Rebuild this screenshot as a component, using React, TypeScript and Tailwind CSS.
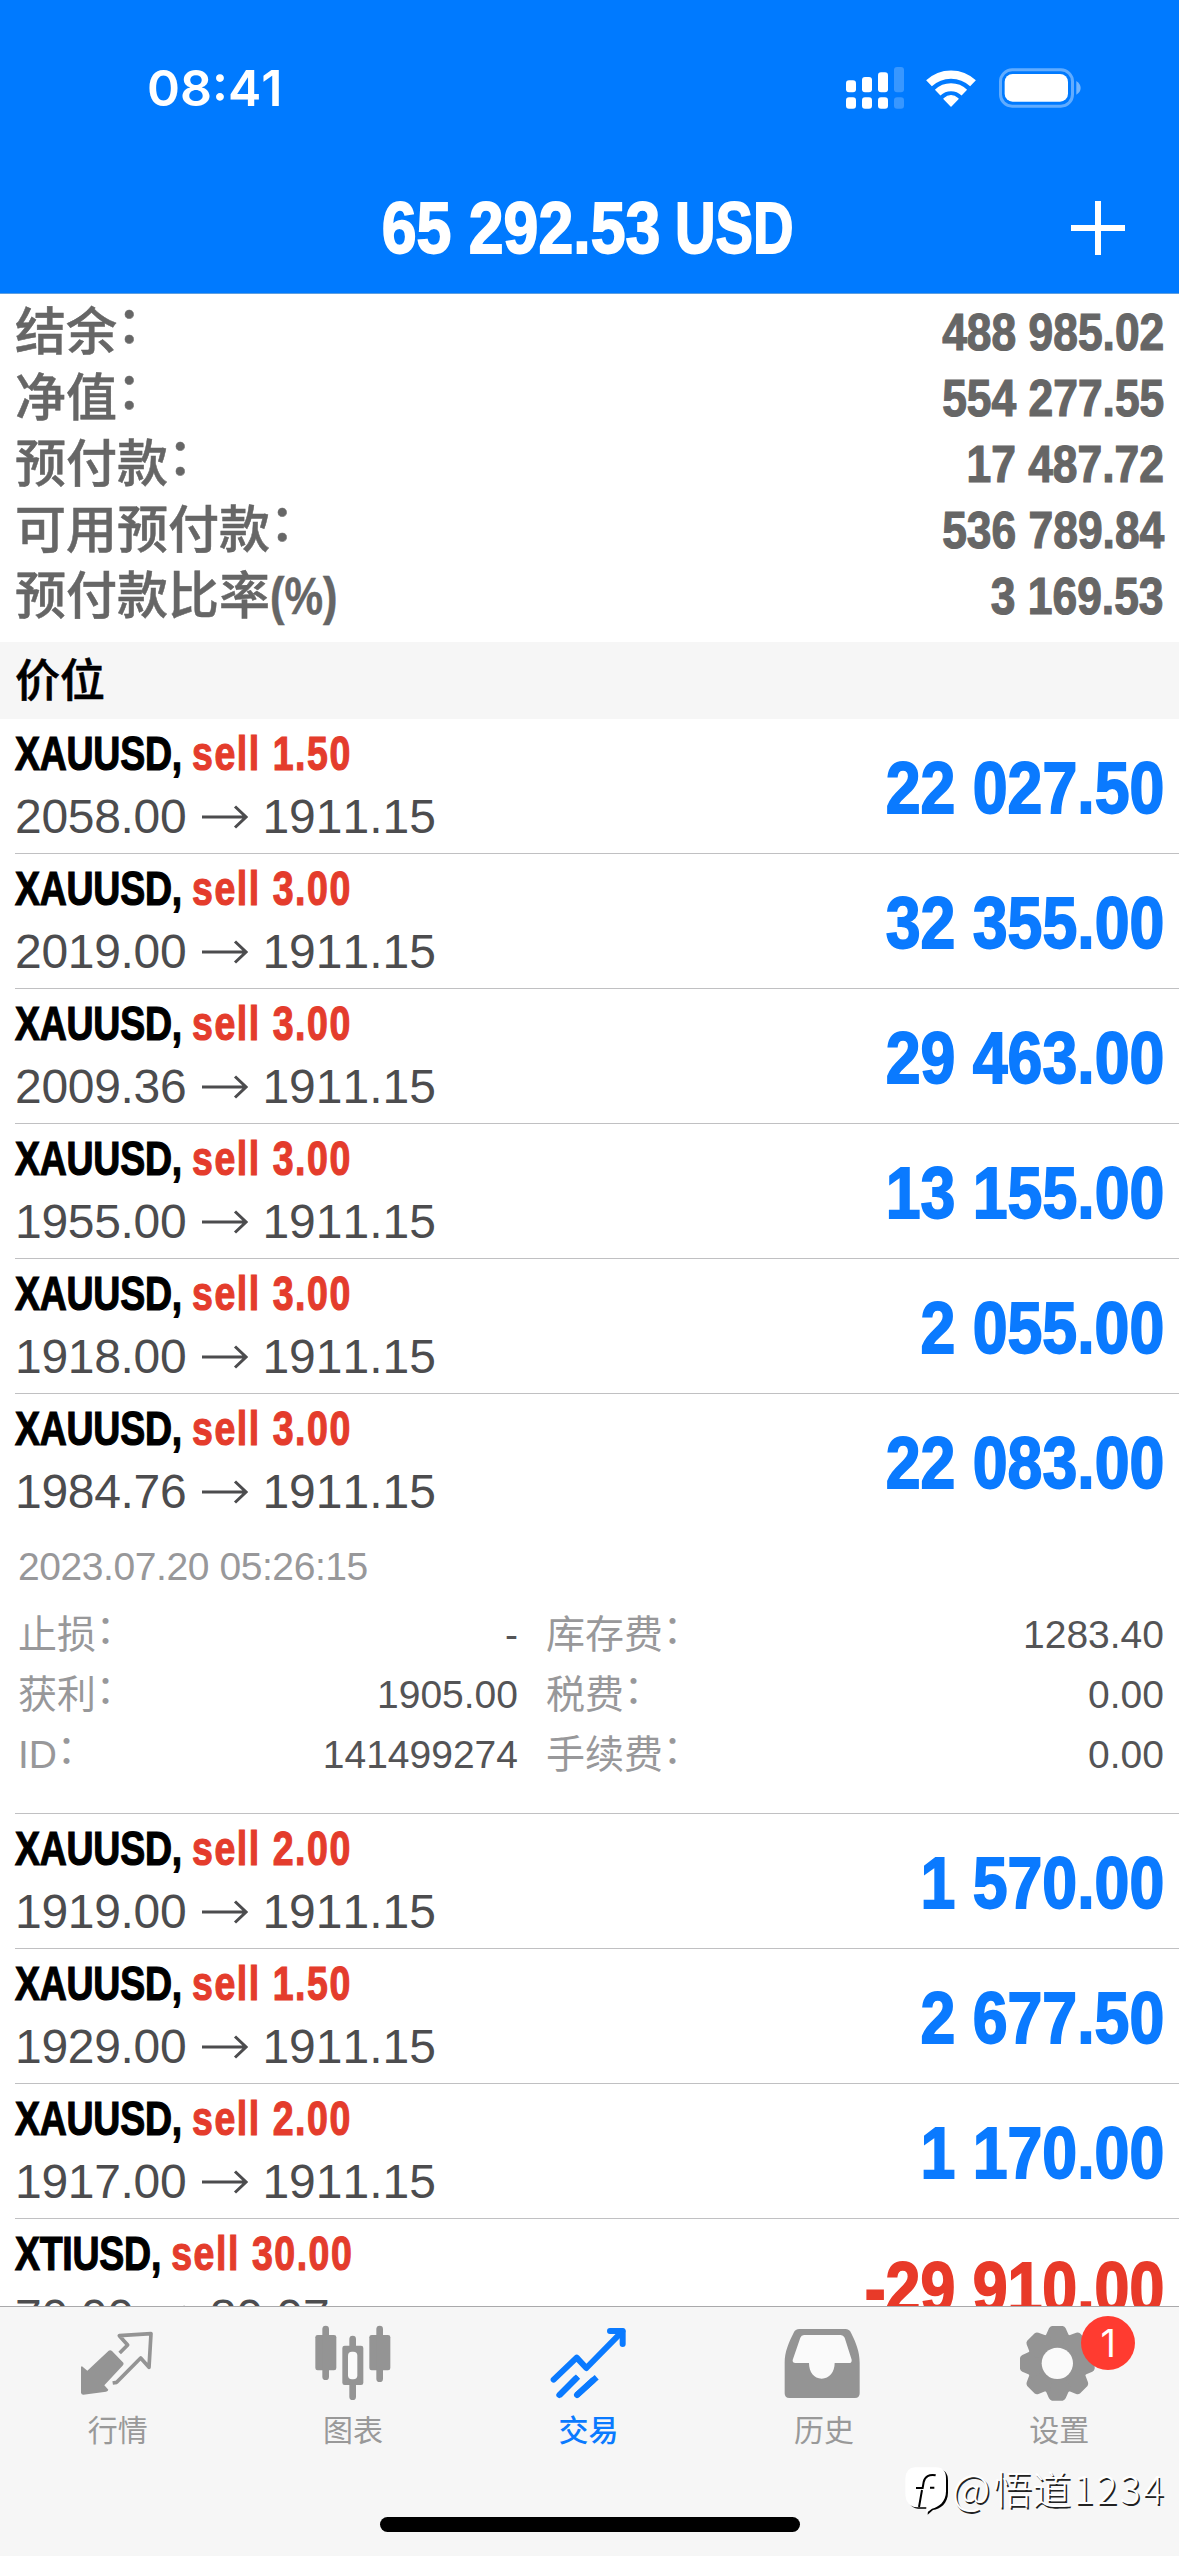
import type { ReactNode } from 'react'

type Trade = {
  symbol: string
  volume: string
  open: string
  current: string
  profit: string
  expanded?: boolean
}

const summary = [
  { label: '结余', colon: true, value: '488 985.02' },
  { label: '净值', colon: true, value: '554 277.55' },
  { label: '预付款', colon: true, value: '17 487.72' },
  { label: '可用预付款', colon: true, value: '536 789.84' },
  { label: '预付款比率', colon: false, value: '3 169.53' },
]

const trades: Trade[] = [
  { symbol: 'XAUUSD', volume: '1.50', open: '2058.00', current: '1911.15', profit: '22 027.50' },
  { symbol: 'XAUUSD', volume: '3.00', open: '2019.00', current: '1911.15', profit: '32 355.00' },
  { symbol: 'XAUUSD', volume: '3.00', open: '2009.36', current: '1911.15', profit: '29 463.00' },
  { symbol: 'XAUUSD', volume: '3.00', open: '1955.00', current: '1911.15', profit: '13 155.00' },
  { symbol: 'XAUUSD', volume: '3.00', open: '1918.00', current: '1911.15', profit: '2 055.00' },
  { symbol: 'XAUUSD', volume: '3.00', open: '1984.76', current: '1911.15', profit: '22 083.00', expanded: true },
  { symbol: 'XAUUSD', volume: '2.00', open: '1919.00', current: '1911.15', profit: '1 570.00' },
  { symbol: 'XAUUSD', volume: '1.50', open: '1929.00', current: '1911.15', profit: '2 677.50' },
  { symbol: 'XAUUSD', volume: '2.00', open: '1917.00', current: '1911.15', profit: '1 170.00' },
  { symbol: 'XTIUSD', volume: '30.00', open: '70.00', current: '80.07', profit: '-29 910.00' },
]

const details = [
  [
    { label: '止损', value: '-' },
    { label: '库存费', value: '1283.40' },
  ],
  [
    { label: '获利', value: '1905.00' },
    { label: '税费', value: '0.00' },
  ],
  [
    { label: 'ID', value: '141499274' },
    { label: '手续费', value: '0.00' },
  ],
]

// full width colon, lifted so its dots sit in the middle of the line
const Colon = () => (
  <span lang="ja" className="relative -top-[0.07em] -ml-[0.26em] font-['Noto_Sans_CJK_JP',sans-serif] leading-0">
    ：
  </span>
)

const SignalIcon = () => (
  <svg width="58" height="42" viewBox="48 50 174 126" fill="#fff">
    <rect x="48" y="90" width="30" height="36" rx="9" />
    <rect x="96" y="80" width="30" height="46" rx="9" />
    <rect x="144" y="66" width="30" height="60" rx="9" />
    <rect x="192" y="50" width="30" height="76" rx="9" opacity="0.22" />
    <rect x="48" y="141" width="30" height="34" rx="9" />
    <rect x="96" y="141" width="30" height="34" rx="9" />
    <rect x="144" y="141" width="30" height="34" rx="9" />
    <rect x="192" y="141" width="30" height="34" rx="9" opacity="0.22" />
  </svg>
)

const WifiIcon = () => (
  <svg width="52" height="38" viewBox="286 55 156 114" fill="none" stroke="#fff" strokeWidth="25">
    <path d="M298 98A96 96 0 0 1 430 98" />
    <path d="M324 126A58 58 0 0 1 404 126" strokeWidth="24" />
    <path d="M343 144Q364 126 385 144L364 166Z" fill="#fff" stroke="#fff" strokeWidth="4" strokeLinejoin="round" />
  </svg>
)

const BatteryIcon = () => (
  <svg width="82" height="40" viewBox="508 53 246 120">
    <rect x="512.5" y="58.5" width="216" height="109" rx="35" fill="none" stroke="#fff" strokeOpacity="0.38" strokeWidth="9" />
    <rect x="525" y="71" width="190" height="83" rx="24" fill="#fff" />
    <path d="M740 92Q753 101 753 113T740 133Z" fill="#fff" fillOpacity="0.45" />
  </svg>
)

const QuotesIcon = () => (
  <svg width="76" height="77" viewBox="60 45 228 231">
    <path
      d="M66 169L82 182 146 122Q151 119 156 123L190 158Q192 162 189 166L133 226 145 239Q144 244 138 245L70 254Q64 254 63 248V170Z"
      fill="#949494"
    />
    <path
      d="M179 129L203 105 178 77 273 71 267 172 242 144 170 217 158 219"
      fill="none"
      stroke="#949494"
      strokeWidth="11"
      strokeLinejoin="round"
    />
  </svg>
)

const ChartIcon = () => (
  <svg width="78" height="77" viewBox="761 45 234 231" fill="#949494">
    <rect x="765" y="75" width="63" height="106" rx="7" />
    <rect x="786" y="47" width="20" height="163" rx="10" />
    <rect x="927" y="75" width="63" height="106" rx="7" />
    <rect x="948" y="47" width="20" height="169" rx="10" />
    <rect x="846" y="107" width="63" height="118" rx="7" />
    <rect x="867" y="77" width="20" height="193" rx="10" />
    <rect x="863" y="125" width="28" height="83" rx="12" fill="#fafafa" />
  </svg>
)

const TradeIcon = () => (
  <svg
    width="78"
    height="77"
    viewBox="61 45 234 231"
    fill="none"
    stroke="#0a7aff"
    strokeWidth="18"
    strokeLinecap="round"
    strokeLinejoin="round"
  >
    <path d="M72 209L141 143 170 174 278 64" />
    <path d="M241 63H279V102" />
    <path d="M89 256L145 200" strokeLinecap="butt" />
    <path d="M141 256L201 202" strokeLinecap="butt" />
    <path d="M89 255L138 206M142 255L190 211" />
  </svg>
)

const HistoryIcon = () => (
  <svg width="82" height="77" viewBox="763 45 246 231">
    <path
      d="M812 57H950Q962 57 967 68C982 98 993 125 993 158V250Q993 264 979 264H782Q768 264 768 250V158C768 125 780 98 795 68Q800 57 812 57Z"
      fill="#949494"
    />
    <path
      d="M826 75H936Q944 75 948 83L969 149Q970 159 961 159H918C918 186 902 206 879 206S841 186 841 159H800Q791 159 792 150L815 83Q818 75 826 75Z"
      fill="#fafafa"
    />
  </svg>
)

const SettingsIcon = () => (
  <svg width="80" height="77" viewBox="393 45 240 231" fill="#949494">
    <circle cx="508" cy="160" r="88" />
    {[0, 45, 90, 135, 180, 225, 270, 315].map((angle) => (
      <path
        key={angle}
        d="M492 48H524Q530 49 533 55L541 73Q544 80 552 84L508 150 464 84Q472 80 475 73L483 55Q486 49 492 48Z"
        transform={`rotate(${angle} 508 160)`}
      />
    ))}
    <circle cx="508" cy="160" r="47" fill="#fafafa" />
  </svg>
)

const WatermarkLogo = () => (
  <svg width="45" height="49" viewBox="42 476 135 147">
    <path
      d="M80 484H140Q174 484 174 520V556C174 588 150 606 129 608L113 622 114 604H84Q52 600 52 560V518Q54 484 80 484Z"
      fill="#000"
    />
    <path
      d="M76 480H138Q168 480 168 514V552C168 584 146 600 126 604L108 618 109 600H80Q46 596 46 556V514Q48 480 76 480Z"
      fill="#fff"
    />
    <path
      d="M137 504C118 500 104 508 101 524L98 542H78M96 548L87 599M120 541H133"
      fill="none"
      stroke="#000"
      strokeWidth="6"
    />
  </svg>
)

const Tab = ({ label, active, children }: { label: string; active?: boolean; children: ReactNode }) => (
  <div className="flex flex-1 flex-col items-center">
    <div className="relative">{children}</div>
    <div
      className={
        active
          ? 'mt-[9px] text-[30px] leading-[40px] font-medium text-[#0a7aff]'
          : 'mt-[9px] text-[30px] leading-[40px] text-[#999]'
      }
    >
      {label}
    </div>
  </div>
)

const TradeDetails = () => (
  <div className="h-[284px] pt-[8px] pl-[3px] text-[39px] leading-[60px] text-[#98989a]">
    <div className="mb-[8px] tracking-[-0.42px]">2023.07.20 05:26:15</div>
    {details.map(([left, right]) => (
      <div className="flex h-[60px] justify-between" key={left.label}>
        <div className="flex w-[500px] justify-between">
          <div>
            {left.label}
            <Colon />
          </div>
          <div className="text-[#545456]">{left.value}</div>
        </div>
        <div className="flex w-[618px] justify-between">
          <div>
            {right.label}
            <Colon />
          </div>
          <div className="text-[#545456]">{right.value}</div>
        </div>
      </div>
    ))}
  </div>
)

const TradeRow = ({ trade }: { trade: Trade }) => (
  <div className="border-b border-[#c0c0c2] pr-[15px]">
    <div className={trade.expanded ? 'flex h-[135px] justify-between' : 'flex h-[134px] justify-between'}>
      <div className="pt-[3px] text-[48px] leading-[63px]">
        <div className="h-[63px] origin-left scale-x-[0.78] font-bold whitespace-nowrap text-black [-webkit-text-stroke:1.2px]">
          <span className="tracking-[-0.3px]">{trade.symbol}, </span>
          <span className="tracking-[2px] text-[#e43c2c]">sell {trade.volume}</span>
        </div>
        <div className="flex items-center text-[#4c4c4e]">
          <span className="tracking-[-0.3px]">{trade.open}</span>
          <svg className="mr-[14px] ml-[16px]" width="46" height="24" viewBox="0 0 46 24" fill="none" stroke="#4c4c4e" strokeWidth="3">
            <path d="M0 12H44M33 1.5L44 12 33 22.5" />
          </svg>
          {trade.current}
        </div>
      </div>
      <div
        className={
          trade.profit.startsWith('-')
            ? 'origin-right scale-x-[0.87] pt-[2px] text-[72px] leading-[134px] font-bold text-[#e83a29] [-webkit-text-stroke:1.8px]'
            : 'origin-right scale-x-[0.87] pt-[2px] text-[72px] leading-[134px] font-bold text-[#0a7aff] [-webkit-text-stroke:1.8px]'
        }
      >
        {trade.profit}
      </div>
    </div>
    {trade.expanded ? <TradeDetails /> : null}
  </div>
)

const App = () => {
  return (
    <div
      lang="zh-CN"
      className="relative flex h-[2556px] w-[1179px] flex-col overflow-hidden bg-white font-['Liberation_Sans','Noto_Sans_CJK_SC',sans-serif] [font-kerning:none]"
    >
      <header className="h-[294px] shrink-0 border-b border-[#5f9fe0] bg-[#007aff] text-white">
        <div className="flex h-[176px] items-center justify-between pr-[98px] pl-[147px]">
          <div className="pt-px font-['Inter',sans-serif] text-[50px] font-semibold">08:41</div>
          <div className="flex items-center">
            <SignalIcon />
            <div className="ml-[21px]">
              <WifiIcon />
            </div>
            <div className="ml-[22px]">
              <BatteryIcon />
            </div>
          </div>
        </div>
        <div className="flex h-[103px] items-center">
          <div className="w-[160px]" />
          <div className="flex flex-1 justify-center gap-[14px] pr-[12px] text-[72px] font-bold [-webkit-text-stroke:1.8px]">
            <div className="origin-right scale-x-[0.87] whitespace-nowrap">65 292.53</div>
            <div className="origin-left scale-x-[0.78]">USD</div>
          </div>
          <div className="w-[160px] pl-[51px]">
            <svg width="56" height="56" viewBox="0 0 56 56" stroke="#fff" strokeWidth="6">
              <path d="M28 1V55M1 28H55" />
            </svg>
          </div>
        </div>
      </header>

      <section className="shrink-0 pt-[6px] pr-[15px] pb-[12px] pl-[15px] text-[51px] leading-[66px] text-[#666]">
        {summary.map((item) => (
          <div className="flex h-[66px] justify-between" key={item.label}>
            <div className="font-medium [-webkit-text-stroke:0.5px]">
              {item.label}
              {item.colon ? <Colon /> : <span className="inline-block origin-left scale-x-[0.85] font-bold">(%)</span>}
            </div>
            <div className="origin-right scale-x-[0.87] font-bold [-webkit-text-stroke:1.2px]">{item.value}</div>
          </div>
        ))}
      </section>

      <h2 className="h-[77px] shrink-0 bg-[#f6f6f6] pt-px pl-[15px] text-[45px] leading-[77px] font-medium text-black [-webkit-text-stroke:0.6px]">
        价位
      </h2>

      <main className="h-[1587px] shrink-0 overflow-hidden pl-[15px]">
        {trades.map((trade, tradeIndex) => (
          <TradeRow trade={trade} key={`trade-${tradeIndex}`} />
        ))}
      </main>

      <nav className="flex h-[250px] shrink-0 flex-col border-t border-[#a9a9ab] bg-[#f6f6f6] pt-[18px]">
        <div className="flex pr-[2px]">
          <Tab label="行情">
            <QuotesIcon />
          </Tab>
          <Tab label="图表">
            <ChartIcon />
          </Tab>
          <Tab label="交易" active>
            <TradeIcon />
          </Tab>
          <Tab label="历史">
            <HistoryIcon />
          </Tab>
          <Tab label="设置">
            <SettingsIcon />
            <div className="absolute -top-[9px] left-[62px] flex h-[54px] w-[54px] items-center justify-center rounded-full bg-[#ff3b30] font-['Inter',sans-serif] text-[38px] text-white">
              1
            </div>
          </Tab>
        </div>
        <div className="mt-[66px] ml-[380px] h-[15px] w-[420px] rounded-full bg-black" />
      </nav>

      <div className="absolute top-[2465px] left-[904px] flex items-center text-white">
        <WatermarkLogo />
        <div className="mb-[6px] ml-[3px] flex font-['Noto_Sans_CJK_SC',sans-serif] text-[39px] leading-[44px] font-light whitespace-nowrap [text-shadow:1.5px_1.5px_0_#222]">
          <span className="mr-[3px] text-[42px]">@</span>
          <span>悟道</span>
          <span className="ml-[2px] tracking-[2.4px]">1234</span>
        </div>
      </div>
    </div>
  )
}

export default App
